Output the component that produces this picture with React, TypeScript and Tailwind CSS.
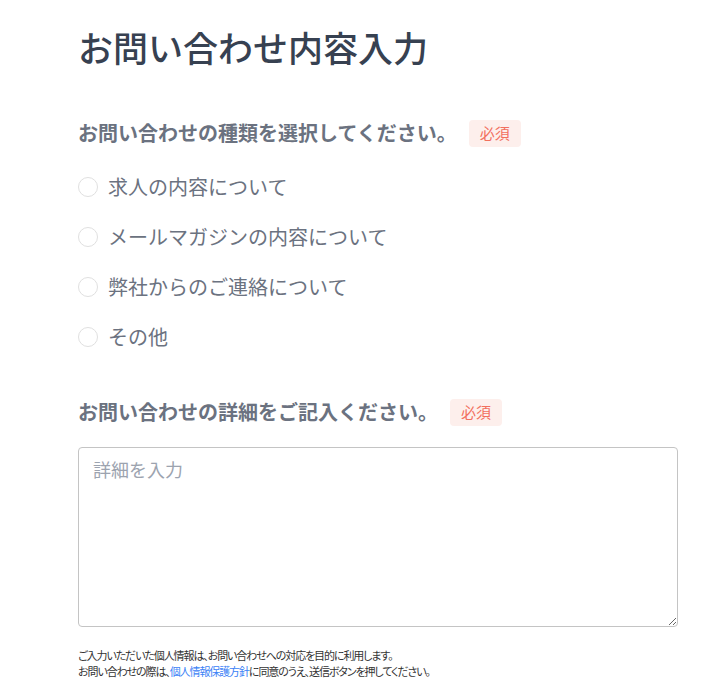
const options = [
  "求人の内容について",
  "メールマガジンの内容について",
  "弊社からのご連絡について",
  "その他",
];

function Required() {
  return (
    <span className="inline-flex h-[27px] items-center rounded-[4px] bg-[#fdefec] px-[11px] text-[15px] text-[#f2705e]">
      必須
    </span>
  );
}

export default function App() {
  return (
    <div
      className="min-h-[691px] bg-white"
      style={{ fontFamily: '"Noto Sans CJK JP", "Noto Sans", sans-serif' }}
    >
      <div className="ml-[78px] w-[600px] pt-[24px]">
        <h1 className="text-[35px] font-medium leading-[46px] text-[#374151]">
          お問い合わせ内容入力
        </h1>

        <div className="mt-[48px] flex items-center gap-[12px]">
          <h2 className="text-[20px] font-bold text-[#6b7280]">
            お問い合わせの種類を選択してください。
          </h2>
          <Required />
        </div>

        <div className="mt-[24px] flex flex-col gap-[20px]">
          {options.map((o) => (
            <label key={o} className="flex h-[30px] items-center gap-[10px]">
              <span className="h-[20px] w-[20px] rounded-full border border-[#e0e0e0] bg-white" />
              <span className="text-[20px] text-[#6b7280]">{o}</span>
            </label>
          ))}
        </div>

        <div className="mt-[45px] flex items-center gap-[12px]">
          <h2 className="text-[20px] font-bold text-[#6b7280]">
            お問い合わせの詳細をご記入ください。
          </h2>
          <Required />
        </div>

        <textarea
          placeholder="詳細を入力"
          className="mt-[20px] block h-[180px] w-[600px] rounded-[4px] border border-[#c4c4c4] px-[14px] py-[8px] text-[18px] text-[#374151] placeholder:text-[#9ca3af] outline-none"
        />

        <p
          className="mt-[20px] text-[11px] leading-[16px] tracking-[-1.1px] text-[#333]"
          style={{ fontFeatureSettings: '"palt"' }}
        >
          ご入力いただいた個人情報は、お問い合わせへの対応を目的に利用します。
          <br />
          お問い合わせの際は、
          <a href="#" className="text-[#3b82f6]">
            個人情報保護方針
          </a>
          に同意のうえ、送信ボタンを押してください。
        </p>
      </div>
    </div>
  );
}
